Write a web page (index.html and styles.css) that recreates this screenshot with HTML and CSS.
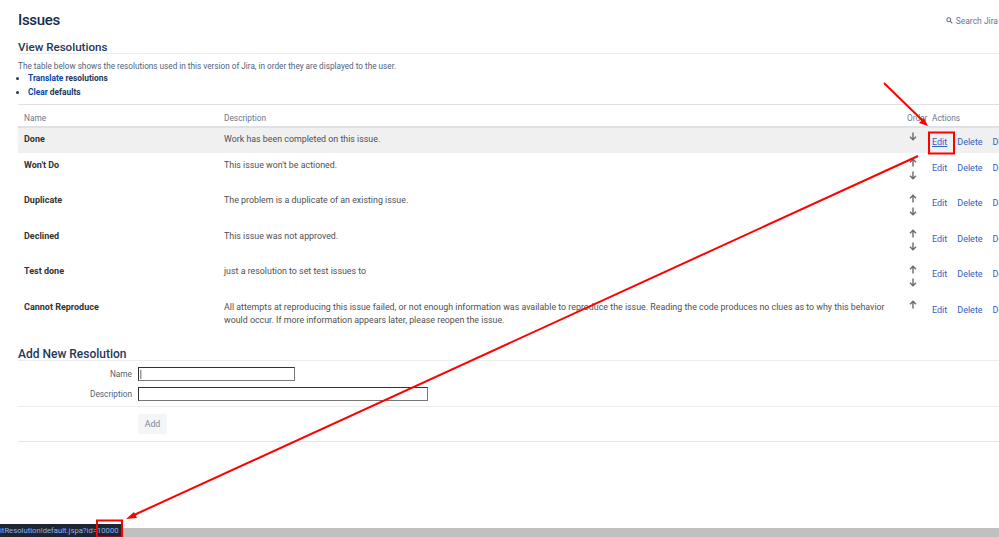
FILE: index.html
```html
<!DOCTYPE html>
<html lang="en">
<head>
<meta charset="utf-8">
<title>View Resolutions</title>
<link rel="stylesheet" href="styles.css">
</head>
<body>
<div class="page">
  <main class="content">
    <header class="top">
      <h1>Issues</h1>
      <div class="search">
        <svg class="search-icon" viewBox="0 0 10 10"><circle cx="4" cy="4" r="2.8"/><path d="M6 6l3 3"/></svg>
        <span>Search Jira</span>
      </div>
    </header>
    <h2 class="section-title">View Resolutions</h2>
    <p class="intro">The table below shows the resolutions used in this version of Jira, in order they are displayed to the user.</p>
    <ul class="ops">
      <li><a href="#">Translate</a> resolutions</li>
      <li><a href="#">Clear</a> defaults</li>
    </ul>
    <table class="res">
      <colgroup><col class="c-name"><col class="c-desc"><col class="c-order"><col class="c-act"></colgroup>
      <thead>
        <tr><th>Name</th><th>Description</th><th class="order">Order</th><th class="act-head">Actions</th></tr>
      </thead>
      <tbody>
        <tr class="hl">
          <td class="name">Done</td><td>Work has been completed on this issue.</td>
          <td class="order"><svg class="arr" viewBox="0 0 8 9"><path d="M4 .5v7M1 4.8l3 3 3-3"/></svg></td>
          <td class="acts"><a class="u" href="#">Edit</a><a href="#">Delete</a><a href="#">Default</a></td>
        </tr>
        <tr>
          <td class="name">Won't Do</td><td>This issue won't be actioned.</td>
          <td class="order"><svg class="arr" viewBox="0 0 8 9"><path d="M4 8.5v-7M1 4.2l3-3 3 3"/></svg><svg class="arr" viewBox="0 0 8 9"><path d="M4 .5v7M1 4.8l3 3 3-3"/></svg></td>
          <td class="acts"><a href="#">Edit</a><a href="#">Delete</a><a href="#">Default</a></td>
        </tr>
        <tr>
          <td class="name">Duplicate</td><td>The problem is a duplicate of an existing issue.</td>
          <td class="order"><svg class="arr" viewBox="0 0 8 9"><path d="M4 8.5v-7M1 4.2l3-3 3 3"/></svg><svg class="arr" viewBox="0 0 8 9"><path d="M4 .5v7M1 4.8l3 3 3-3"/></svg></td>
          <td class="acts"><a href="#">Edit</a><a href="#">Delete</a><a href="#">Default</a></td>
        </tr>
        <tr>
          <td class="name">Declined</td><td>This issue was not approved.</td>
          <td class="order"><svg class="arr" viewBox="0 0 8 9"><path d="M4 8.5v-7M1 4.2l3-3 3 3"/></svg><svg class="arr" viewBox="0 0 8 9"><path d="M4 .5v7M1 4.8l3 3 3-3"/></svg></td>
          <td class="acts"><a href="#">Edit</a><a href="#">Delete</a><a href="#">Default</a></td>
        </tr>
        <tr>
          <td class="name">Test done</td><td>just a resolution to set test issues to</td>
          <td class="order"><svg class="arr" viewBox="0 0 8 9"><path d="M4 8.5v-7M1 4.2l3-3 3 3"/></svg><svg class="arr" viewBox="0 0 8 9"><path d="M4 .5v7M1 4.8l3 3 3-3"/></svg></td>
          <td class="acts"><a href="#">Edit</a><a href="#">Delete</a><a href="#">Default</a></td>
        </tr>
        <tr>
          <td class="name">Cannot Reproduce</td><td class="desc">All attempts at reproducing this issue failed, or not enough information was available to reproduce the issue. Reading the code produces no clues as to why this behavior would occur. If more information appears later, please reopen the issue.</td>
          <td class="order"><svg class="arr" viewBox="0 0 8 9"><path d="M4 8.5v-7M1 4.2l3-3 3 3"/></svg></td>
          <td class="acts"><a href="#">Edit</a><a href="#">Delete</a><a href="#">Default</a></td>
        </tr>
      </tbody>
    </table>
    <h2 class="section-title add-title">Add New Resolution</h2>
    <form class="add-form">
      <div class="field"><label for="n">Name</label><input id="n" class="short" type="text"></div>
      <div class="field"><label for="d">Description</label><input id="d" class="long" type="text"></div>
      <div class="buttons"><button type="button">Add</button></div>
    </form>
  </main>
  <footer class="status">
    <div class="status-url">itResolution!default.jspa?id=10000</div>
  </footer>
</div>
<svg class="annot" viewBox="0 0 999 537" aria-hidden="true">
  <rect x="929" y="132.5" width="25" height="21"/>
  <rect x="97" y="520.5" width="25" height="17"/>
  <path d="M884 83L923 121"/>
  <path class="head" d="M928 126l-9-3 5-5z"/>
  <path d="M918 156L134 515"/>
  <path class="head" d="M126 519l8-7 3 6z"/>
</svg>
</body>
</html>
```
FILE: styles.css
```css
* { box-sizing: border-box; }
html, body { margin: 0; height: 100%; overflow: hidden; background: #fff; }
body { font-family: Roboto, "Open Sans", sans-serif; font-size: 9px; color: #42526e; }
.page { position: relative; width: 999px; height: 537px; display: flex; flex-direction: column; overflow: hidden; }
.content { flex: 1; padding: 0 0 0 18px; min-height: 0; }

.top { display: flex; justify-content: space-between; align-items: center; height: 40px; padding-top: 1px; }
h1 { margin: 0; font-size: 15px; font-weight: 500; letter-spacing: -.3px; color: #172b4d; line-height: 39px; }
.search { display: flex; align-items: center; gap: 3px; color: #6b778c; font-size: 8.5px; padding-right: 1px; }
.search-icon { width: 7px; height: 7px; fill: none; stroke: #5e6c84; stroke-width: 1.5; }

.section-title { margin: 0; font-size: 11.6px; font-weight: 500; color: #253858; line-height: 14px; height: 13px; border-bottom: 1px solid #ebecf0; box-sizing: content-box; }
.intro { margin: 7px 0 0; line-height: 10px; height: 10px; font-size: 8.2px; color: #505f79; }
.ops { margin: 0; padding: 0 0 0 10px; font-weight: 700; color: #253858; font-size: 8.4px; list-style-position: outside; }
.ops li { line-height: 14px; }
.ops a { color: #0747a6; text-decoration: none; }

.res { border-collapse: collapse; table-layout: fixed; width: 1090px; margin-top: 5px; border-top: 1px solid #dfe1e6; font-size: 8.85px; }
.c-name { width: 200px; } .c-desc { width: 689px; } .c-order { width: 25px; } .c-act { width: 176px; }
th { font-weight: 400; text-align: left; color: #6b778c; font-size: 8.3px; height: 22px; padding: 6px 6px 0; border-bottom: 2px solid #dfe1e6; white-space: nowrap; }
td { vertical-align: top; padding: 6px 6px 0; height: 35.5px; color: #505050; line-height: 13px; }
tr.hl td { height: 26px; background: #f0f0f0; padding-top: 5px; }
.name { font-weight: 700; color: #333; font-size: 9px; }
th.order { padding: 6px 0 0; overflow: visible; }
td.order { padding: 5.5px 0 0; line-height: 0; }
th.act-head { padding-left: 0; }
tr.hl td.order { padding-top: 4px; }
.arr { display: block; width: 8px; height: 9px; margin: 0 0 4px 2px; fill: none; stroke: #6b6b6b; stroke-width: 1.4; }
td.acts { padding: 9px 0 0; white-space: nowrap; font-size: 9px; }
tr.hl td.acts { padding-top: 8px; }
.acts a { color: #2d5fc4; text-decoration: none; margin-right: 10px; }
.acts a.u { text-decoration: underline; }

.add-title { margin-top: 17px; font-size: 12px; }
.add-form { font-size: 8.3px; }
.field { display: flex; align-items: center; gap: 6px; }
.field:first-child { margin-top: 6px; }
.field + .field { margin-top: 6px; }
.field label { width: 114px; text-align: right; color: #505f79; }
input { height: 14px; padding: 0; border: 1.5px solid #333; border-right-color: #777; border-bottom-color: #777; background: #fff; }
input.short { width: 157px; background: linear-gradient(#999, #999) 1px center / 1.5px 9px no-repeat #fff; }
input.long { width: 290px; }
.buttons { margin-top: 5px; padding: 7px 0 7px 120px; border-top: 1px solid #ebecf0; border-bottom: 1.5px solid #e6e7ea; }
button { display: block; width: 29px; height: 20px; padding: 0; border: 0; border-radius: 2px; background: #f4f5f7; color: #7a869a; font: inherit; font-size: 8.8px; }

.status { height: 9px; background: #c0c0c0; flex: none; position: relative; }
.status-url { position: absolute; left: 0; bottom: 0; height: 13px; width: 122px; background: #1f2530; color: #8ab4f8; font-size: 7.7px; line-height: 14px; white-space: nowrap; overflow: hidden; }

.annot { position: absolute; left: 0; top: 0; width: 999px; height: 537px; pointer-events: none; fill: none; stroke: #f00; stroke-width: 2; }
.annot .head { fill: #f00; stroke: none; }
```
